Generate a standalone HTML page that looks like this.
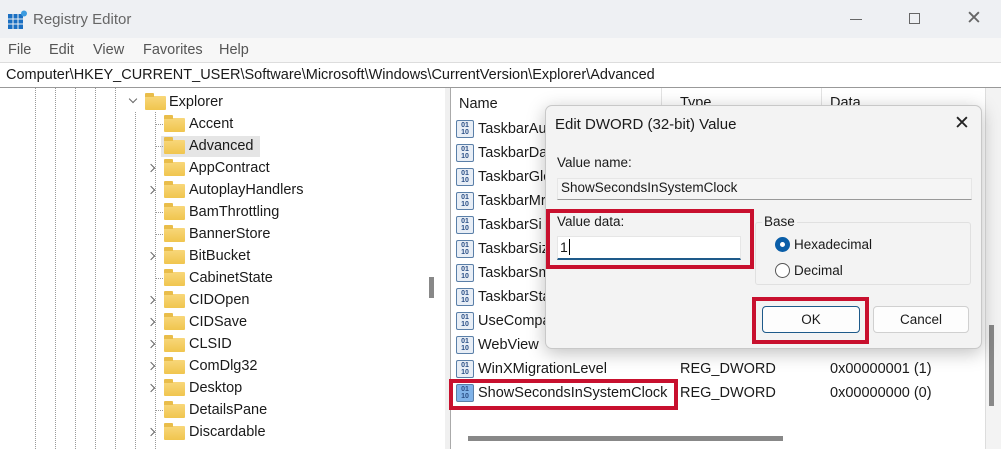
<!DOCTYPE html>
<html><head><meta charset="utf-8"><style>
*{margin:0;padding:0;box-sizing:border-box}
body{width:1001px;height:449px;overflow:hidden;background:#fff;font-family:"Liberation Sans",sans-serif;position:relative;color:#1a1a1a}
.a{position:absolute;white-space:nowrap}
.t{font-size:14.5px}
.fold{position:absolute;width:21px;height:14px;background:linear-gradient(#f8d77a,#f0c54e);border-radius:1px}
.fold:before{content:"";position:absolute;left:0;top:-3px;width:9px;height:4px;background:#e9bd4a;border-radius:1px 1px 0 0}
.chev{position:absolute;width:6px;height:6px;border-right:1.5px solid #666;border-bottom:1.5px solid #666;transform:rotate(-45deg)}
.vl{position:absolute;width:0;border-left:1px dotted #999;top:88px;height:361px}
.ico{position:absolute;width:18px;height:18px;border:1px solid #5a7fa8;border-radius:2px;background:#e8eef6;font-size:7px;line-height:7px;color:#2a4f86;font-weight:bold;text-align:center;padding-top:1px;letter-spacing:0}
.red{position:absolute;border:4px solid #c8102e}
</style></head><body>
<!-- title bar -->
<div class="a" style="left:0;top:0;width:1001px;height:38px;background:#eef0f3"></div>
<svg class="a" style="left:8px;top:10px" width="20" height="20"><rect x="0" y="4" width="15" height="15" fill="#1a6fc2"/><g stroke="#eef0f3" stroke-width="1"><line x1="5" y1="4" x2="5" y2="19"/><line x1="10" y1="4" x2="10" y2="19"/><line x1="0" y1="9" x2="15" y2="9"/><line x1="0" y1="14" x2="15" y2="14"/></g><circle cx="16" cy="3.5" r="3" fill="#3c9be0"/></svg>
<div class="a t" style="left:33px;top:11px;color:#666;font-size:15px">Registry Editor</div>
<div class="a" style="left:850px;top:19px;width:12px;border-top:1px solid #666"></div>
<div class="a" style="left:909px;top:13px;width:11px;height:11px;border:1px solid #666"></div>
<div class="a" style="left:966px;top:7px;font-size:19px;color:#666">✕</div>
<!-- menu -->
<div class="a" style="left:0;top:38px;width:1001px;height:24px;background:#f7f7f7"></div>
<div class="a t" style="left:8px;top:42px;color:#555">File</div>
<div class="a t" style="left:49px;top:42px;color:#555">Edit</div>
<div class="a t" style="left:93px;top:42px;color:#555">View</div>
<div class="a t" style="left:143px;top:42px;color:#555">Favorites</div>
<div class="a t" style="left:219px;top:42px;color:#555">Help</div>
<!-- address -->
<div class="a" style="left:0;top:62px;width:1001px;height:26px;background:#fff;border-top:1px solid #ddd;border-bottom:1px solid #999"></div>
<div class="a t" style="left:6px;top:67px;font-size:14.5px">Computer\HKEY_CURRENT_USER\Software\Microsoft\Windows\CurrentVersion\Explorer\Advanced</div>
<!-- tree -->
<div class="vl" style="left:35px"></div><div class="vl" style="left:55px"></div><div class="vl" style="left:75px"></div><div class="vl" style="left:95px"></div><div class="vl" style="left:115px"></div>
<div class="vl" style="left:135px;top:112px;height:337px"></div>
<div class="vl" style="left:155px;top:112px;height:337px"></div>
<div class="chev" style="left:130px;top:96px;transform:rotate(45deg)"></div>
<div class="fold" style="left:145px;top:96px"></div>
<div class="a t" style="left:169px;top:94px">Explorer</div>
<div class="a" style="left:161px;top:136px;width:99px;height:21px;background:#e5e5e5"></div>
<div id="tree"></div>
<div class="a" style="left:429px;top:277px;width:5px;height:21px;background:#888"></div>
<div class="a" style="left:445px;top:88px;width:6px;height:361px;background:#f0f0f0;border-right:1px solid #aaa"></div>
<!-- right pane -->
<div class="a" style="left:661px;top:88px;height:22px;border-left:1px solid #e3e3e3"></div>
<div class="a" style="left:821px;top:88px;height:22px;border-left:1px solid #e3e3e3"></div>
<div class="a t" style="left:459px;top:96px">Name</div>
<div class="a t" style="left:680px;top:95px">Type</div>
<div class="a t" style="left:830px;top:95px">Data</div>
<div id="rows"></div>
<div class="a" style="left:985px;top:88px;width:16px;height:361px;background:#f3f3f3;border-left:1px solid #ddd"></div>
<div class="a" style="left:989px;top:325px;width:5px;height:81px;background:#888"></div>
<div class="a" style="left:468px;top:436px;width:315px;height:5px;background:#888"></div>
<div class="red" style="left:449px;top:379px;width:229px;height:31px"></div>
<!-- dialog -->
<div class="a" style="left:545px;top:105px;width:437px;height:244px;background:#f3f3f3;border:1px solid #c8c8c8;border-radius:7px;box-shadow:0 4px 18px rgba(0,0,0,.25)"></div>
<div class="a" style="left:555px;top:116px;font-size:15px">Edit DWORD (32-bit) Value</div>
<div class="a" style="left:954px;top:112px;font-size:19px;color:#222">✕</div>
<div class="a" style="left:557px;top:155px;font-size:13.5px">Value name:</div>
<div class="a" style="left:557px;top:178px;width:415px;height:22px;background:#f5f5f5;border:1px solid #e6e6e6;border-bottom:1px solid #999"></div>
<div class="a" style="left:561px;top:180px;font-size:13.5px">ShowSecondsInSystemClock</div>
<div class="a" style="left:557px;top:214px;font-size:13.5px">Value data:</div>
<div class="a" style="left:557px;top:236px;width:184px;height:24px;background:#fff;border:1px solid #e6e6e6;border-bottom:2px solid #1e5a8a"></div>
<div class="a" style="left:560px;top:239px;font-size:14px">1<span style="border-left:1px solid #000;margin-left:1px"></span></div>
<div class="red" style="left:546px;top:209px;width:208px;height:60px"></div>
<div class="a" style="left:755px;top:222px;width:216px;height:63px;border:1px solid #e0e0e0;border-radius:3px"></div>
<div class="a" style="left:762px;top:214px;font-size:13.5px;background:#f3f3f3;padding:0 2px">Base</div>
<div class="a" style="left:775px;top:237px;width:15px;height:15px;border-radius:50%;background:#0a5ea8;border:4px solid #0a5ea8;box-shadow:inset 0 0 0 2px #fff"></div>
<div class="a" style="left:776px;top:238px;width:13px;height:13px;border-radius:50%;border:4px solid #0a5ea8;background:#fff"></div>
<div class="a" style="left:794px;top:237px;font-size:13.5px">Hexadecimal</div>
<div class="a" style="left:775px;top:263px;width:15px;height:15px;border-radius:50%;border:1px solid #555;background:#fff"></div>
<div class="a" style="left:794px;top:263px;font-size:13.5px">Decimal</div>
<div class="a" style="left:762px;top:306px;width:98px;height:27px;background:#fdfdfd;border:1px solid #1e5a8a;border-radius:4px;text-align:center;font-size:13.5px;line-height:25px">OK</div>
<div class="a" style="left:873px;top:306px;width:96px;height:27px;background:#fdfdfd;border:1px solid #d0d0d0;border-radius:4px;text-align:center;font-size:13.5px;line-height:25px">Cancel</div>
<div class="red" style="left:752px;top:297px;width:117px;height:47px"></div>
<script>
var tr=["Accent","Advanced","AppContract","AutoplayHandlers","BamThrottling","BannerStore","BitBucket","CabinetState","CIDOpen","CIDSave","CLSID","ComDlg32","Desktop","DetailsPane","Discardable"];
var ex={AppContract:1,AutoplayHandlers:1,BitBucket:1,CIDOpen:1,CIDSave:1,CLSID:1,ComDlg32:1,Desktop:1,Discardable:1};
var h="";tr.forEach(function(n,i){var y=124+i*22;
if(ex[n])h+='<div class="chev" style="left:148px;top:'+(y-3)+'px"></div>';else h+='<div class="a" style="left:156px;top:'+y+'px;width:7px;border-top:1px dotted #999"></div>';
h+='<div class="fold" style="left:164px;top:'+(y-6)+'px"></div><div class="a t" style="left:189px;top:'+(y-8)+'px">'+n+'</div>';});
document.getElementById("tree").innerHTML=h;
var r=["TaskbarAu","TaskbarDa","TaskbarGlo","TaskbarMr","TaskbarSi","TaskbarSiz","TaskbarSm","TaskbarSta","UseCompa","WebView","WinXMigrationLevel","ShowSecondsInSystemClock"];
h="";r.forEach(function(n,i){var y=129+i*24;
h+='<div class="ico" style="left:456px;top:'+(y-9)+'px'+(i==11?';background:#7fb2e8':'')+'">01<br>10</div><div class="a t" style="left:478px;top:'+(y-8)+'px">'+n+'</div>';
if(i>=10){h+='<div class="a t" style="left:680px;top:'+(y-8)+'px">REG_DWORD</div><div class="a t" style="left:830px;top:'+(y-8)+'px">'+(i==10?'0x00000001 (1)':'0x00000000 (0)')+'</div>';}});
document.getElementById("rows").innerHTML=h;
</script>
</body></html>
